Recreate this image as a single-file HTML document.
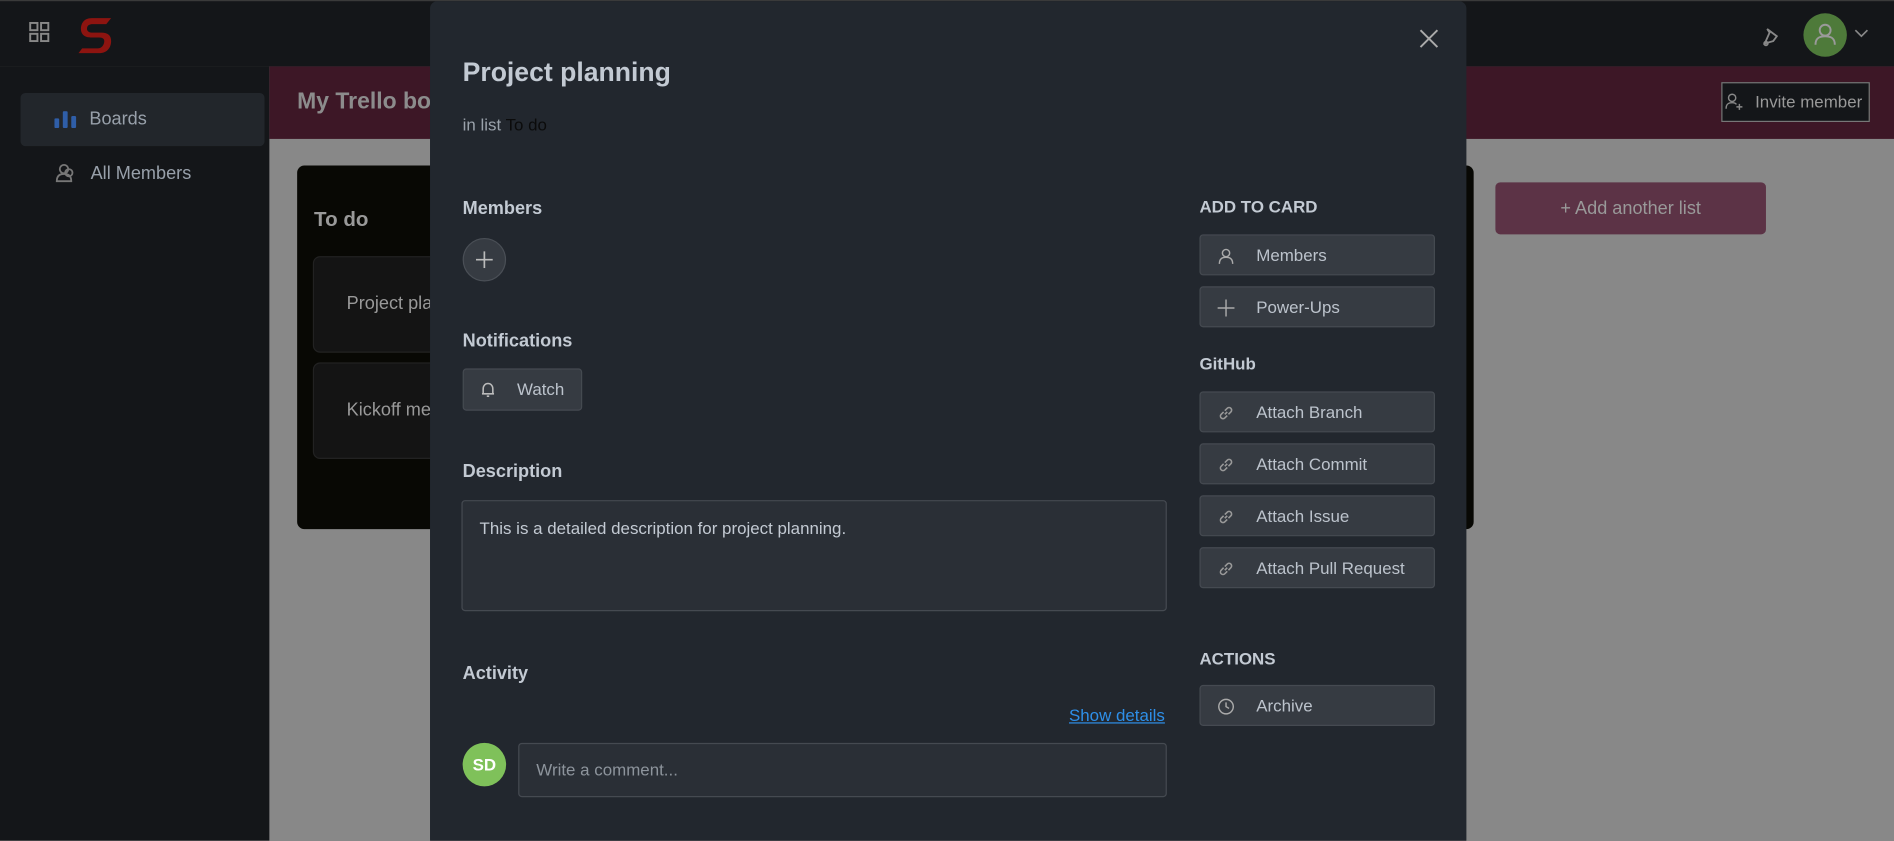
<!DOCTYPE html>
<html><head><meta charset="utf-8"><style>
*{box-sizing:border-box;margin:0;padding:0}
html,body{width:1894px;height:841px;overflow:hidden;background:#888}
#w{position:absolute;left:0;top:0;width:1568px;height:696px;transform:scale(1.20791);transform-origin:0 0;font-family:"Liberation Sans",sans-serif;background:#888;overflow:hidden}
.a{position:absolute}
.top{left:0;top:0;width:1568px;height:55px;background:#141619;border-top:1px solid #3a3a3a}
.side{left:0;top:55px;width:223px;height:641px;background:#141619}
.bh{left:223px;top:55px;width:1345px;height:60px;background:#3d1726}
.list{left:246px;top:137px;width:974px;height:301px;background:#080804;border-radius:6px}
.card{background:#141414;border:1px solid #222;border-radius:6px;color:#999;font-size:15px}
.modal{left:356px;top:1px;width:858px;height:700px;background:#22272e;border-radius:6px;color:#c3cad3}
h4{position:absolute;font-size:15px;font-weight:bold;color:#c3cad3}
.btn{position:absolute;left:637px;width:195px;height:34px;background:#363b42;border:1px solid #454a51;border-radius:3px;font-size:14px;color:#bcc3cc;line-height:32px;padding-left:46px}
.btn svg{position:absolute;left:14px;top:10px}
</style></head><body><div id="w">
<div class="a top"></div>
<div class="a side"></div>
<svg class="a" style="left:24px;top:18px" width="17" height="17" viewBox="0 0 17 17" fill="none" stroke="#888" stroke-width="1.6"><rect x="1" y="1" width="6" height="6"/><rect x="10" y="1" width="6" height="6"/><rect x="1" y="10" width="6" height="6"/><rect x="10" y="10" width="6" height="6"/></svg>
<svg class="a" style="left:62px;top:12px" width="34" height="34" viewBox="0 0 34 34"><path d="M30 3 H14 C7 3 5 8 5 12 C5 17 9 19 13 19 H20 C24 19 25 21 24 24 C23 27 21 28 19 28 H6 L3 32 H20 C27 32 30 27 30 22 C30 17 27 15 22 15 H14 C11 15 10 13 10 12 C10 9 12 8 15 8 H26 Z" fill="#8d1410"/></svg>
<div class="a" style="left:17px;top:77px;width:202px;height:44px;background:#22262b;border-radius:4px"></div>
<svg class="a" style="left:45px;top:92px" width="20" height="14" viewBox="0 0 20 14" fill="#2f5ea8"><rect x="0" y="6" width="4" height="8" rx="1"/><rect x="7" y="0" width="4" height="14" rx="1"/><rect x="14" y="4" width="4" height="10" rx="1"/></svg>
<div class="a" style="left:74px;top:90px;font-size:15px;color:#98a0aa">Boards</div>
<svg class="a" style="left:45px;top:135px" width="18" height="17" viewBox="0 0 18 17" fill="none" stroke="#777" stroke-width="1.5"><circle cx="8" cy="5" r="3.5"/><path d="M2 15 C2 10 5 9 8 9 C11 9 14 10 14 15 Z"/><circle cx="12" cy="8" r="3"/></svg>
<div class="a" style="left:75px;top:135px;font-size:15px;color:#98a0aa">All Members</div>
<div class="a bh"></div>
<div class="a" style="left:246px;top:74px;font-size:19px;font-weight:bold;color:#8c8c8c">My Trello board</div>
<div class="a" style="left:1425px;top:68px;width:123px;height:33px;background:#141619;border:1px solid #777;color:#999;font-size:14px;line-height:31px;padding-left:27px">Invite member</div>
<svg class="a" style="left:1428px;top:76px" width="16" height="16" viewBox="0 0 16 16" fill="none" stroke="#888" stroke-width="1.2"><circle cx="6" cy="5" r="3"/><path d="M1 14 C1 10 3 9 6 9 C8 9 9 9.5 9.5 10.5"/><path d="M12 10 V15 M9.5 12.5 H14.5"/></svg>
<svg class="a" style="left:1457px;top:20px" width="20" height="20" viewBox="0 0 20 20" fill="none" stroke="#888" stroke-width="1.5"><path d="M6 4 L14 10 L11 14 L4 16 L8 7 Z"/><circle cx="5" cy="16" r="1.5"/></svg>
<div class="a" style="left:1493px;top:11px;width:36px;height:36px;border-radius:50%;background:#4e7a3a"></div>
<svg class="a" style="left:1500px;top:17px" width="22" height="22" viewBox="0 0 22 22" fill="none" stroke="#9a9a9a" stroke-width="1.6"><circle cx="11" cy="8" r="4.5"/><path d="M3 20 C3 14 7 13 11 13 C15 13 19 14 19 20"/></svg>
<svg class="a" style="left:1535px;top:24px" width="12" height="8" viewBox="0 0 12 8" fill="none" stroke="#888" stroke-width="1.4"><path d="M1 1 L6 6 L11 1"/></svg>
<div class="a list"></div>
<div class="a" style="left:260px;top:172px;font-size:17px;font-weight:bold;color:#999">To do</div>
<div class="a card" style="left:259px;top:212px;width:200px;height:80px;padding:30px 0 0 27px">Project planning</div>
<div class="a card" style="left:259px;top:300px;width:200px;height:80px;padding:30px 0 0 27px">Kickoff meeting</div>
<div class="a" style="left:1238px;top:151px;width:224px;height:43px;background:#5c3346;border-radius:4px;color:#999;font-size:15px;text-align:center;line-height:43px">+ Add another list</div>

<div class="a modal">
<div class="a" style="left:27px;top:46px;font-size:22px;font-weight:bold;color:#c3cad3">Project planning</div>
<div class="a" style="left:27px;top:94px;font-size:14px;color:#9aa2ab">in list <span style="color:#0b0b0b">To do</span></div>
<svg class="a" style="left:819px;top:23px" width="16" height="16" viewBox="0 0 16 16" stroke="#aaa" stroke-width="1.6"><path d="M1 1 L15 15 M15 1 L1 15"/></svg>
<h4 style="left:27px;top:163px">Members</h4>
<div class="a" style="left:27px;top:196px;width:36px;height:36px;border-radius:50%;background:#363b42;border:1px solid #4a4f56"></div>
<svg class="a" style="left:38px;top:207px" width="14" height="14" viewBox="0 0 14 14" stroke="#bbb" stroke-width="1.4"><path d="M7 0 V14 M0 7 H14"/></svg>
<h4 style="left:27px;top:273px">Notifications</h4>
<div class="a" style="left:27px;top:304px;width:99px;height:35px;background:#363b42;border:1px solid #454a51;border-radius:3px;font-size:14px;color:#bcc3cc;line-height:33px;padding-left:44px">Watch</div>
<svg class="a" style="left:42px;top:315px" width="12" height="13" viewBox="0 0 12 13" fill="none" stroke="#bbb" stroke-width="1.3"><path d="M2 10 V6 C2 3 4 1.5 6 1.5 C8 1.5 10 3 10 6 V10 Z M1 10 H11 M5 12 H7"/></svg>
<h4 style="left:27px;top:381px">Description</h4>
<div class="a" style="left:26px;top:413px;width:584px;height:92px;background:#2a2f36;border:1px solid #454a51;border-radius:3px;font-size:14px;color:#c3cad3;padding:14px 14px">This is a detailed description for project planning.</div>
<h4 style="left:27px;top:548px">Activity</h4>
<div class="a" style="left:529px;top:583px;font-size:14px;color:#2e8fe8;text-decoration:underline">Show details</div>
<div class="a" style="left:27px;top:614px;width:36px;height:36px;border-radius:50%;background:#7fc15a;color:#fff;font-weight:bold;font-size:14px;text-align:center;line-height:36px">SD</div>
<div class="a" style="left:73px;top:614px;width:537px;height:45px;background:#2a2f36;border:1px solid #454a51;border-radius:3px;font-size:14px;color:#8d949c;padding:13px 14px">Write a comment...</div>

<h4 style="left:637px;top:162px;font-size:14px">ADD TO CARD</h4>
<div class="btn" style="top:193px"><svg width="14" height="14" viewBox="0 0 14 14" fill="none" stroke="#aaa" stroke-width="1.2"><circle cx="7" cy="4.5" r="3"/><path d="M1.5 13.5 C1.5 9 4 8 7 8 C10 8 12.5 9 12.5 13.5"/></svg>Members</div>
<div class="btn" style="top:236px"><svg width="14" height="14" viewBox="0 0 14 14" stroke="#aaa" stroke-width="1.2"><path d="M7 0 V14 M0 7 H14"/></svg>Power-Ups</div>
<h4 style="left:637px;top:292px;font-size:14px">GitHub</h4>
<div class="btn" style="top:323px"><svg width="14" height="14" viewBox="0 0 14 14" fill="none" stroke="#999" stroke-width="1.3"><path d="M6 8 L8 6 M5 6 L3 8 A2 2 0 0 0 6 11 L8 9 M9 8 L11 6 A2 2 0 0 0 8 3 L6 5"/></svg>Attach Branch</div>
<div class="btn" style="top:366px"><svg width="14" height="14" viewBox="0 0 14 14" fill="none" stroke="#999" stroke-width="1.3"><path d="M6 8 L8 6 M5 6 L3 8 A2 2 0 0 0 6 11 L8 9 M9 8 L11 6 A2 2 0 0 0 8 3 L6 5"/></svg>Attach Commit</div>
<div class="btn" style="top:409px"><svg width="14" height="14" viewBox="0 0 14 14" fill="none" stroke="#999" stroke-width="1.3"><path d="M6 8 L8 6 M5 6 L3 8 A2 2 0 0 0 6 11 L8 9 M9 8 L11 6 A2 2 0 0 0 8 3 L6 5"/></svg>Attach Issue</div>
<div class="btn" style="top:452px"><svg width="14" height="14" viewBox="0 0 14 14" fill="none" stroke="#999" stroke-width="1.3"><path d="M6 8 L8 6 M5 6 L3 8 A2 2 0 0 0 6 11 L8 9 M9 8 L11 6 A2 2 0 0 0 8 3 L6 5"/></svg>Attach Pull Request</div>
<h4 style="left:637px;top:536px;font-size:14px">ACTIONS</h4>
<div class="btn" style="top:566px"><svg width="14" height="14" viewBox="0 0 14 14" fill="none" stroke="#aaa" stroke-width="1.2"><circle cx="7" cy="7" r="6"/><path d="M7 3.5 V7 L9.5 8.5"/></svg>Archive</div>
</div>
</div></body></html>
